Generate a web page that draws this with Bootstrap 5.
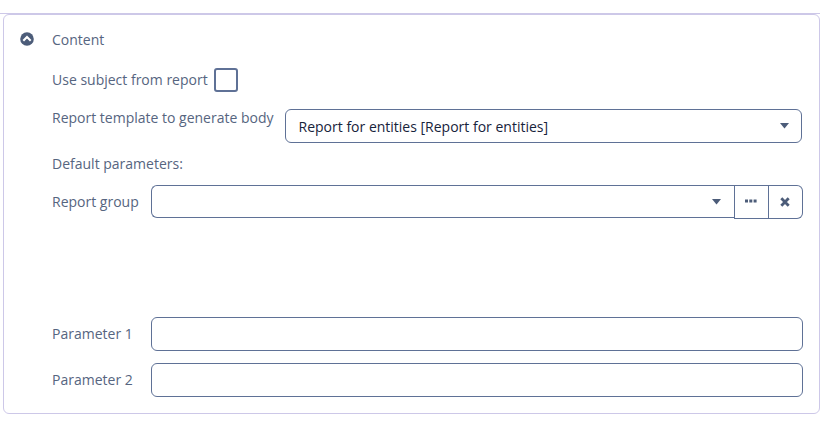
<!DOCTYPE html>
<html lang="en">
<head>
<meta charset="utf-8">
<meta name="viewport" content="width=device-width, initial-scale=1">
<title>Content</title>
<link href="https://cdn.jsdelivr.net/npm/bootstrap@5.3.0/dist/css/bootstrap.min.css" rel="stylesheet">
<style>
body{font-family:"Open Sans",sans-serif;font-size:14px;line-height:20px;color:#566580;background:#fff;overflow:hidden}
.top-line{height:1px;width:820px;margin-top:13px;background:#cdc8e8}
.panel{width:817px;height:400px;margin-left:3px;border:1px solid #cdc8e8;border-radius:6px;padding:15px 16px 16px}
.toggle{width:32px;height:20px;padding:0 0 2px;line-height:0}
.toggle svg{display:block}
.fields{padding-left:32px}
.form-check-input.check{width:24px;height:24px;border:2px solid #5f7196;border-radius:3px;margin:0 0 0 6px}
.box{height:34px;border:1px solid #5f7196;border-radius:6px;background:#fff;color:#526078;font-size:14px;padding:0 13px}
.choice{width:517px;color:#17233b;margin-left:11px;padding-right:12px}
.choice span{padding-top:2px}
.lbl{width:99px}
.lbl-group{padding-top:7px}
.row-check{height:24px;margin-top:18px}
.row-template{margin-top:17px}
.row-template label{margin-top:-1px}
.row-default{height:20px;margin-top:11px}
.row-group{margin-top:11px}
.combo{height:33px;border-radius:6px 0 0 6px;border-right:0}
.side{width:35px;height:34px;padding:0 1px 2px 0;border-radius:0}
.side.last{border-left:0;border-radius:0 6px 6px 0;width:34px;padding:0 1px 0 0}
.row-param{margin-top:12px}
.row-param.first{margin-top:98px}
</style>
<script src="https://cdn.jsdelivr.net/npm/bootstrap@5.3.0/dist/js/bootstrap.bundle.min.js"></script>
</head>
<body>
<div class="top-line"></div>
<main class="panel">
  <div class="d-flex align-items-start">
    <button class="btn border-0 toggle text-start" aria-label="Collapse">
      <svg width="14" height="14" viewBox="0 0 14 14"><circle cx="7" cy="7" r="6.8" fill="#4c5c79"/><path d="M3.3 8.7 7 5l3.7 3.7" fill="none" stroke="#fff" stroke-width="2.1"/></svg>
    </button>
    <span>Content</span>
  </div>
  <div class="fields">
    <div class="row-check d-flex align-items-center">
      <label for="subj">Use subject from report</label>
      <input class="form-check-input check" type="checkbox" id="subj">
    </div>
    <div class="row-template d-flex align-items-start">
      <label class="text-nowrap">Report template to generate body</label>
      <div class="box choice d-flex align-items-center justify-content-between">
        <span>Report for entities [Report for entities]</span>
        <svg width="9" height="6" viewBox="0 0 9 6"><path d="M0 0h9L4.5 5.5z" fill="#4c5c79"/></svg>
      </div>
    </div>
    <div class="row-default">Default parameters:</div>
    <div class="row-group d-flex">
      <label class="lbl lbl-group flex-shrink-0">Report group</label>
      <div class="box combo d-flex flex-grow-1 align-items-center justify-content-end">
        <svg width="9" height="6" viewBox="0 0 9 6"><path d="M0 0h9L4.5 5.5z" fill="#4c5c79"/></svg>
      </div>
      <button class="btn box side d-flex align-items-center justify-content-center" aria-label="Lookup">
        <svg width="12" height="4" viewBox="0 0 12 4"><path d="M0 .5h3v3H0zM4.3.5h3v3h-3zM8.6.5h3v3h-3z" fill="#4c5c79"/></svg>
      </button>
      <button class="btn box side last d-flex align-items-center justify-content-center" aria-label="Clear">
        <svg width="10" height="10" viewBox="0 0 10 10"><path d="m1.3 1.3 7.4 7.4m0-7.4L1.3 8.7" stroke="#4c5c79" stroke-width="2.8"/></svg>
      </button>
    </div>
    <div class="row-param first d-flex align-items-center">
      <label class="lbl flex-shrink-0" for="p1">Parameter 1</label>
      <input class="form-control box" id="p1" type="text">
    </div>
    <div class="row-param d-flex align-items-center">
      <label class="lbl flex-shrink-0" for="p2">Parameter 2</label>
      <input class="form-control box" id="p2" type="text">
    </div>
  </div>
</main>
</body>
</html>
